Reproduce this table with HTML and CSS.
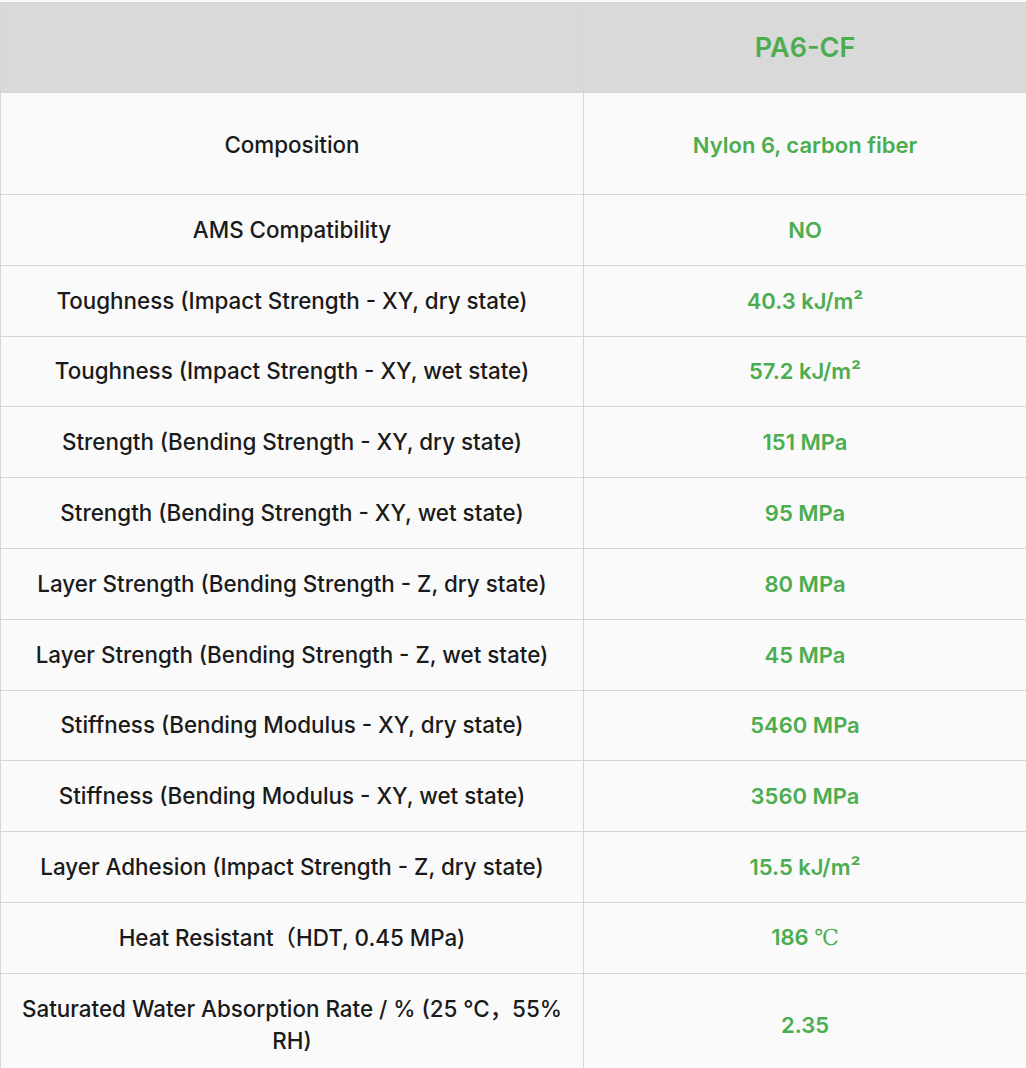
FILE: index.html
```html
<!DOCTYPE html>
<html>
<head>
<meta charset="utf-8">
<link rel="stylesheet" href="styles.css">
</head>
<body>
<table class="spec">
  <colgroup><col class="c1"><col class="c2"></colgroup>
  <thead>
    <tr class="head"><th></th><th class="val">PA6-CF</th></tr>
  </thead>
  <tbody>
    <tr class="r-tall"><td>Composition</td><td class="val">Nylon 6, carbon fiber</td></tr>
    <tr><td>AMS Compatibility</td><td class="val">NO</td></tr>
    <tr><td>Toughness (Impact Strength - XY, dry state)</td><td class="val">40.3 kJ/m²</td></tr>
    <tr><td>Toughness (Impact Strength - XY, wet state)</td><td class="val">57.2 kJ/m²</td></tr>
    <tr><td>Strength (Bending Strength - XY, dry state)</td><td class="val">151 MPa</td></tr>
    <tr><td>Strength (Bending Strength - XY, wet state)</td><td class="val">95 MPa</td></tr>
    <tr><td>Layer Strength (Bending Strength - Z, dry state)</td><td class="val">80 MPa</td></tr>
    <tr><td>Layer Strength (Bending Strength - Z, wet state)</td><td class="val">45 MPa</td></tr>
    <tr><td>Stiffness (Bending Modulus - XY, dry state)</td><td class="val">5460 MPa</td></tr>
    <tr><td>Stiffness (Bending Modulus - XY, wet state)</td><td class="val">3560 MPa</td></tr>
    <tr><td>Layer Adhesion (Impact Strength - Z, dry state)</td><td class="val">15.5 kJ/m²</td></tr>
    <tr><td>Heat Resistant（HDT, 0.45 MPa)</td><td class="val">186 <span class="deg">℃</span></td></tr>
    <tr class="r-last"><td>Saturated Water Absorption Rate / % (25 °C，55% RH)</td><td class="val">2.35</td></tr>
  </tbody>
</table>
</body>
</html>
```
FILE: styles.css
```css
html, body { margin: 0; padding: 0; background: #fafafa; }
body { padding-top: 2px; }
.spec {
  width: 1027px;
  border-collapse: collapse;
  table-layout: fixed;
  font-family: Inter, "Noto Sans CJK SC", sans-serif;
  font-weight: 500;
  font-size: 22.4px;
  color: #1a1a1a;
  background: #fafafa;
}
.c1 { width: 583px; }
.spec th, .spec td {
  border: 1px solid #d6d6d6;
  text-align: center;
  vertical-align: middle;
  padding: 0 20px;
  height: 70.8px;
  box-sizing: border-box;
  line-height: 32px;
}
.spec tr.head th {
  background: #d9d9d9;
  height: 90px;
  font-size: 27px;
  font-weight: 600;
}
.spec tr.r-tall td { height: 102px; padding-top: 2px; }
.spec tr.r-last td { height: 100px; padding-top: 4px; }
.val { color: #4cad50; font-weight: 600; font-size: 22px; }
.deg { font-family: "DejaVu Serif", "Liberation Serif", serif; font-weight: 400; }
```
